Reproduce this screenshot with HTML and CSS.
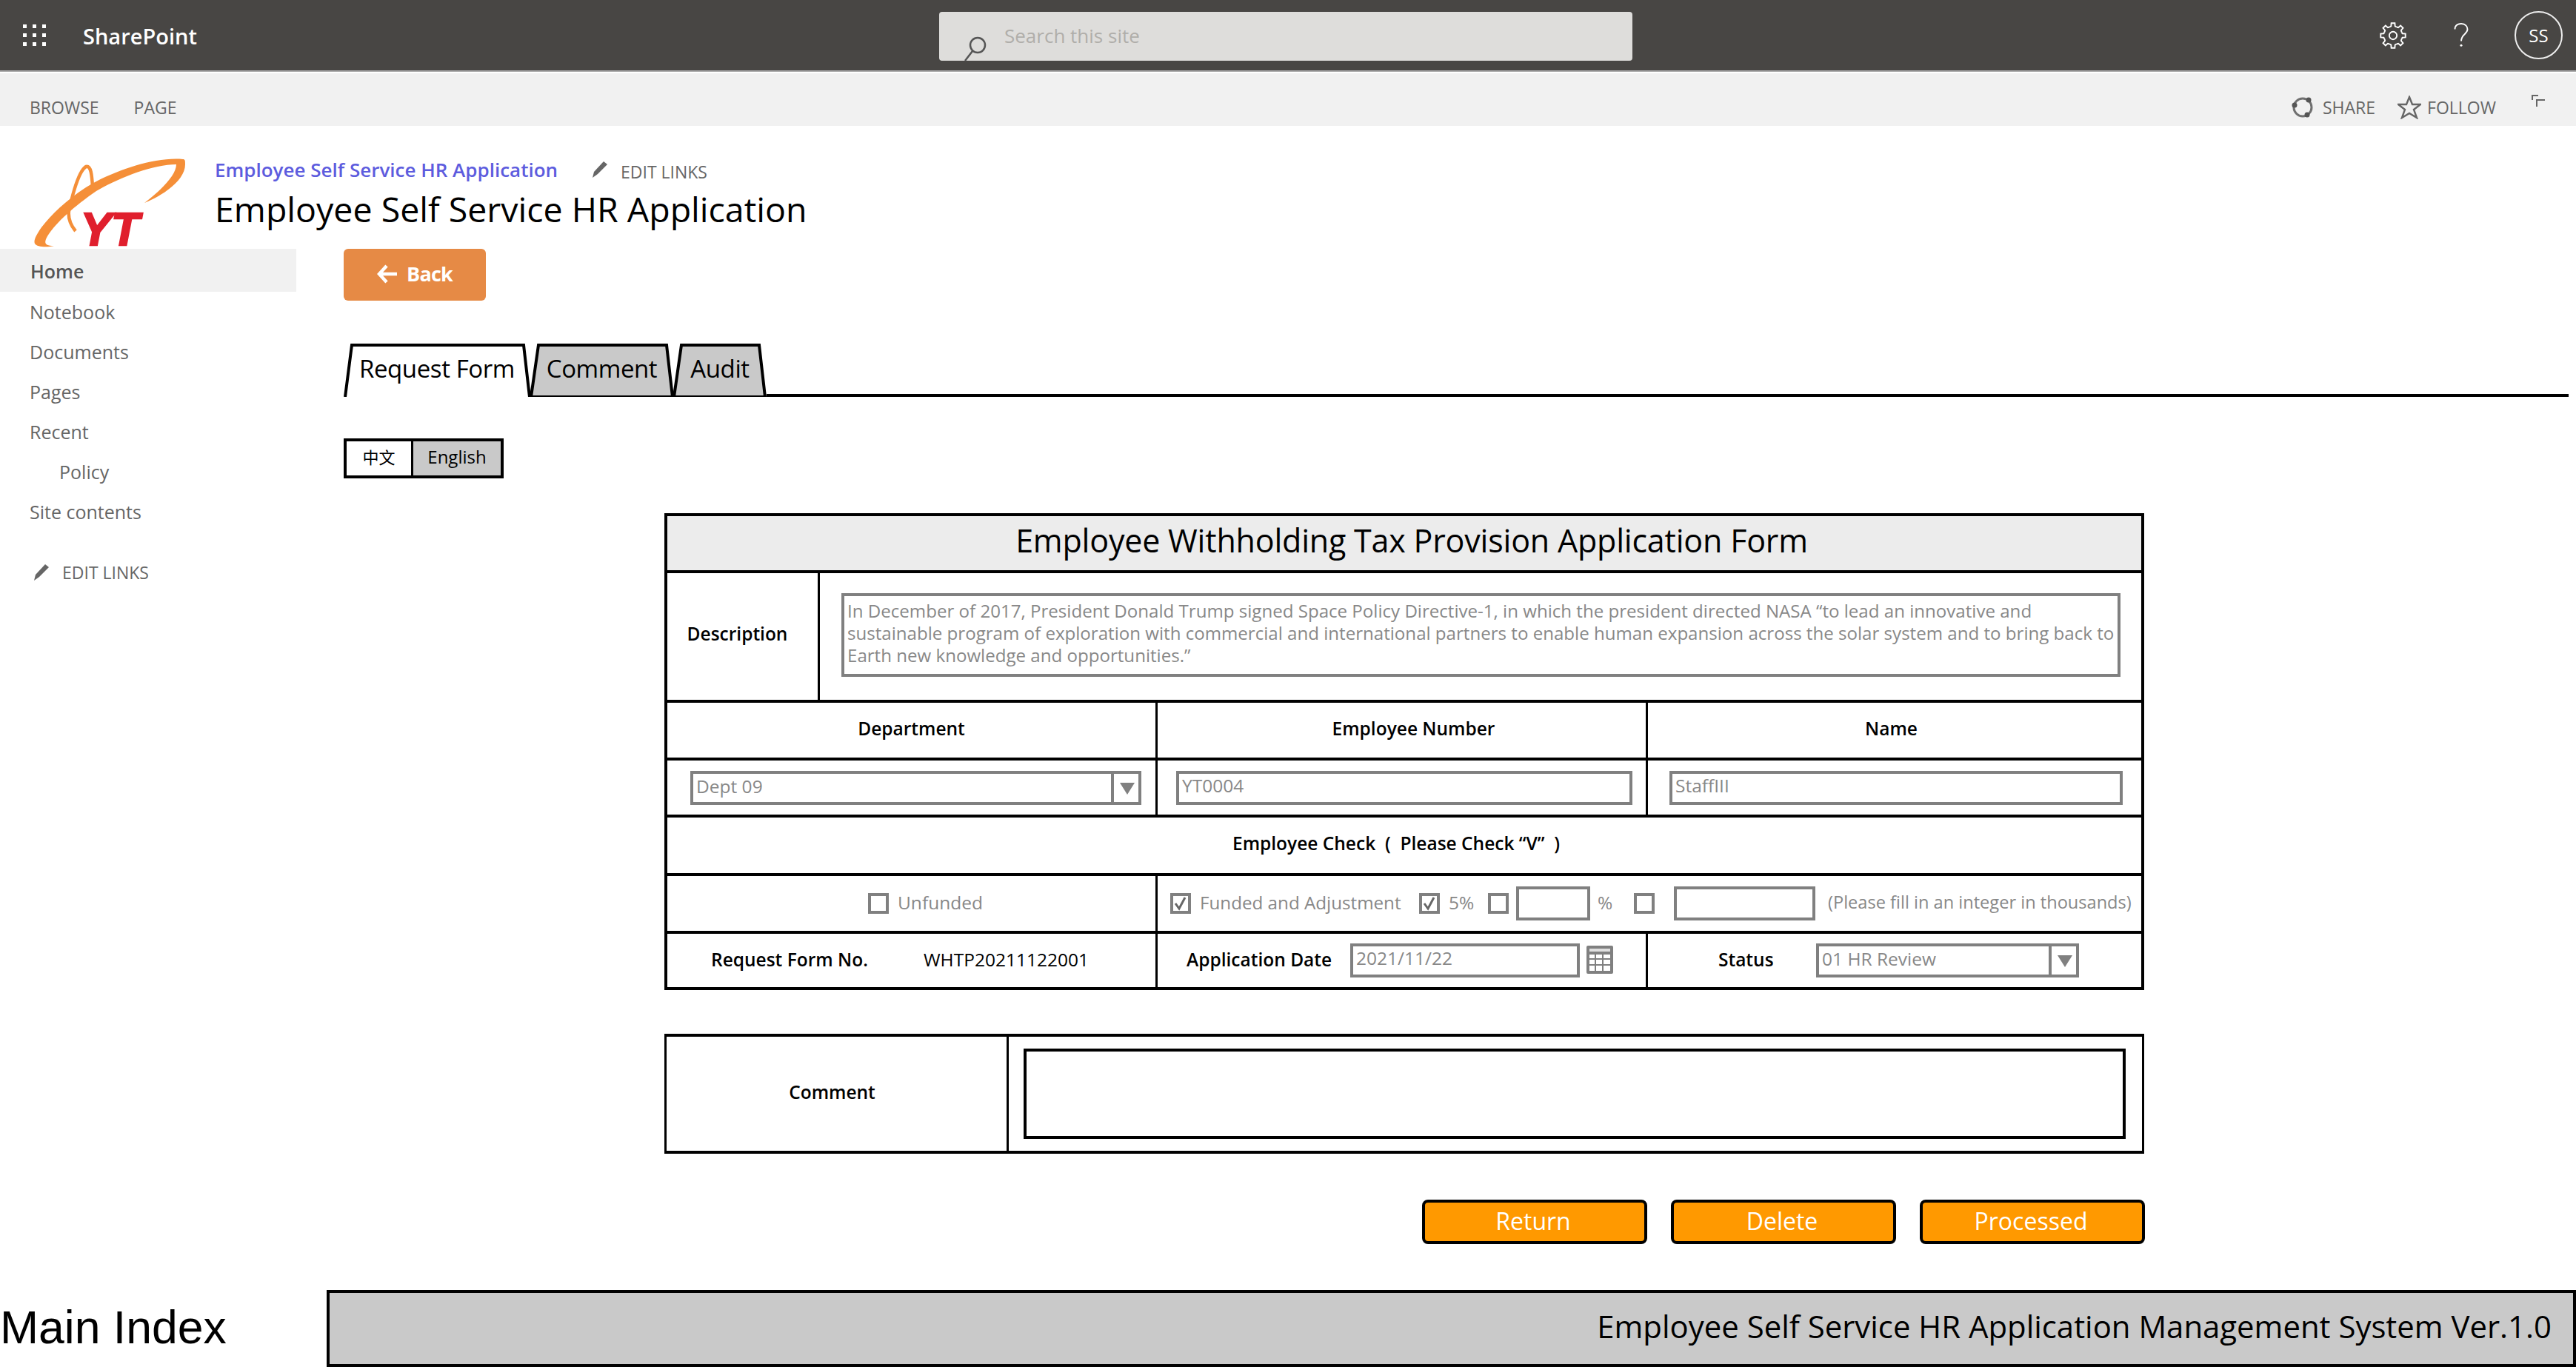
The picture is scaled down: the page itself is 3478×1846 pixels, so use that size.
FILE: index.html
```html
<!DOCTYPE html>
<html lang="en">
  <head>
    <meta charset="UTF-8" />
    <title>Employee Self Service HR Application</title>
    <link rel="stylesheet" href="styles.css">
  </head>

  <body>
    <div class="topbar">
      <svg class="waffle" width="34" height="32" viewBox="0 0 34 32">
        <g fill="#fff">
          <rect x="1" y="1" width="5" height="5" /><rect x="14" y="1" width="5" height="5" /><rect x="27" y="1" width="5" height="5" />
          <rect x="1" y="13" width="5" height="5" /><rect x="14" y="13" width="5" height="5" /><rect x="27" y="13" width="5" height="5" />
          <rect x="1" y="25" width="5" height="5" /><rect x="14" y="25" width="5" height="5" /><rect x="27" y="25" width="5" height="5" />
        </g>
      </svg>
      <div class="brand">SharePoint</div>
      <div class="search">
        <svg class="search-icon" width="42" height="40" viewBox="0 0 42 40">
          <circle cx="26" cy="18" r="10" fill="none" stroke="#555" stroke-width="2.5" />
          <path d="M19 26 L9 39" stroke="#555" stroke-width="2.5" />
        </svg>
        <span class="search-text">Search this site</span>
      </div>
      <div class="top-icons">
        <svg class="gear" width="36" height="36" viewBox="0 0 32 32">
          <defs>
            <path id="tooth" d="M11.8 5.8 L13.6 4.75 L13.9 1.15 H18.1 L18.4 4.75 L20.2 5.8" />
          </defs>
          <g fill="none" stroke="#fff" stroke-width="1.7">
            <use href="#tooth" />
            <use href="#tooth" transform="rotate(45 16 16)" />
            <use href="#tooth" transform="rotate(90 16 16)" />
            <use href="#tooth" transform="rotate(135 16 16)" />
            <use href="#tooth" transform="rotate(180 16 16)" />
            <use href="#tooth" transform="rotate(225 16 16)" />
            <use href="#tooth" transform="rotate(270 16 16)" />
            <use href="#tooth" transform="rotate(315 16 16)" />
            <circle cx="16" cy="16" r="4.6" />
          </g>
        </svg>
        <svg class="help" width="24" height="34" viewBox="0 0 24 36">
          <path d="M3 9 C3 3 8 1 12 1 C18 1 21 5 21 9 C21 16 12 16 12 26" fill="none" stroke="#fff" stroke-width="2" />
          <circle cx="12" cy="32" r="1.6" fill="#fff" />
        </svg>
        <div class="avatar">SS</div>
      </div>
    </div>

    <div class="ribbon">
      <div class="ribbon-tabs">
        <span>BROWSE</span>
        <span>PAGE</span>
      </div>
      <div class="ribbon-actions">
        <svg width="30" height="30" viewBox="0 0 30 30">
          <circle cx="15" cy="15" r="12" fill="none" stroke="#707070" stroke-width="3" />
          <circle cx="23" cy="5" r="3.5" fill="#555" /><circle cx="4" cy="12" r="3.5" fill="#555" /><circle cx="21" cy="25" r="3.5" fill="#555" />
        </svg>
        <span class="share-text">SHARE</span>
        <svg class="star" width="32" height="32" viewBox="0 0 32 32">
          <polygon points="16,2 20,12 31,12 22,19 26,30 16,24 6,30 10,19 1,12 12,12" fill="none" stroke="#666" stroke-width="2.4" />
        </svg>
        <span class="follow-text">FOLLOW</span>
        <svg class="focus" width="20" height="18" viewBox="0 0 20 18">
          <path d="M9 1 H1 V7 M18 7 H7 V16" fill="none" stroke="#666" stroke-width="2" />
        </svg>
      </div>
    </div>

    <div class="site-head">
      <svg class="logo" width="206" height="140" viewBox="0 0 206 140">
        <path d="M201 3 C165 0 120 15 84 33 C55 48 25 75 10 95 C3 105 -1 113 1 117 C4 122 18 122 27 120 C14 120 13 116 18 107 C30 88 55 66 84 46 C115 28 160 10 192 10 C192 25 170 46 149 62 C178 50 204 30 204 10 C204 5 204 3 201 3 Z" fill="#f58f38" />
        <path d="M56 100 C46 88 44 75 50 60 C55 40 62 18 70 13 C77 11 78 25 79 40" fill="none" stroke="#f58f38" stroke-width="4.5" />
        <text class="logo-text" x="63" y="119" textLength="79" lengthAdjust="spacingAndGlyphs">YT</text>
      </svg>
      <div class="site-titles">
        <div class="crumbs">
          <a class="crumb">Employee Self Service HR Application</a>
          <svg class="pencil" width="24" height="24" viewBox="0 0 24 24">
            <path d="M2 23 L4 15 L17 1 L22 5 L9 18 Z" fill="#666" />
          </svg>
          <span class="edit-links">EDIT LINKS</span>
        </div>
        <h1 class="site-title">Employee Self Service HR Application</h1>
      </div>
    </div>

    <div class="main">
      <div class="sidebar">
        <div class="nav-item nav-active">Home</div>
        <div class="nav-item">Notebook</div>
        <div class="nav-item">Documents</div>
        <div class="nav-item">Pages</div>
        <div class="nav-item">Recent</div>
        <div class="nav-item nav-sub">Policy</div>
        <div class="nav-item">Site contents</div>
        <div class="nav-edit">
          <svg class="pencil" width="24" height="24" viewBox="0 0 24 24">
            <path d="M2 23 L4 15 L17 1 L22 5 L9 18 Z" fill="#666" />
          </svg>
          <span class="edit-links">EDIT LINKS</span>
        </div>
      </div>

      <div class="content">
        <button class="back">
          <svg width="28" height="26" viewBox="0 0 28 26">
            <path d="M13 2 L3 13 L13 24 M3 13 H27" fill="none" stroke="#fff" stroke-width="4.5" />
          </svg>
          <span>Back</span>
        </button>

        <div class="tabs">
          <div class="tab tab-request">
            <svg class="tab-shape" viewBox="0 0 252 72" preserveAspectRatio="none">
              <path d="M2 72 L11 2 H243 L251 72" fill="#fff" stroke="#000" stroke-width="4" />
            </svg>
            <span class="tab-label">Request Form</span>
          </div>
          <div class="tab tab-comment">
            <svg class="tab-shape" viewBox="0 0 193 72" preserveAspectRatio="none">
              <path d="M1 72 L11 2 H184 L192 72 Z" fill="#c9c9c9" stroke="#000" stroke-width="4" />
            </svg>
            <span class="tab-label">Comment</span>
          </div>
          <div class="tab tab-audit">
            <svg class="tab-shape" viewBox="0 0 126 72" preserveAspectRatio="none">
              <path d="M1 72 L11 2 H116 L124 72 Z" fill="#c9c9c9" stroke="#000" stroke-width="4" />
            </svg>
            <span class="tab-label">Audit</span>
          </div>
          <div class="tab-rule"></div>
        </div>

        <div class="lang">
          <div class="lang-zh">中文</div>
          <div class="lang-en">English</div>
        </div>

        <div class="form">
          <div class="form-title">Employee Withholding Tax Provision Application Form</div>

          <div class="row row-desc">
            <div class="cell cell-label">Description</div>
            <div class="cell cell-desc">
              <div class="field textarea">In December of 2017, President Donald Trump signed Space Policy Directive-1, in which the president directed NASA “to lead an innovative and<br>sustainable program of exploration with commercial and international partners to enable human expansion across the solar system and to bring back to<br>Earth new knowledge and opportunities.”</div>
            </div>
          </div>

          <div class="row row-cols row-head">
            <div class="cell cell-label">Department</div>
            <div class="cell cell-label cell-empno">Employee Number</div>
            <div class="cell cell-label cell-name-head">Name</div>
          </div>

          <div class="row row-cols row-inputs">
            <div class="cell cell-dept">
              <div class="field select">
                <span class="select-value">Dept 09</span>
                <span class="select-arrow"></span>
              </div>
            </div>
            <div class="cell cell-no"><div class="field">YT0004</div></div>
            <div class="cell cell-name"><div class="field">StaffIII</div></div>
          </div>

          <div class="row row-check-title">
            <div class="cell cell-label">Employee Check &nbsp;( &nbsp;Please Check “V” &nbsp;)</div>
          </div>

          <div class="row row-checks">
            <div class="cell cell-unfunded">
              <span class="box"></span>
              <span class="check-text gap-12">Unfunded</span>
            </div>
            <div class="cell cell-funded">
              <span class="box box-on">
                <svg width="20" height="20" viewBox="0 0 20 20"><path d="M3 10 L8 17 L16 2" fill="none" stroke="#666" stroke-width="3" /></svg>
              </span>
              <span class="check-text gap-12 text-funded">Funded and Adjustment</span>
              <span class="box box-on gap-26">
                <svg width="20" height="20" viewBox="0 0 20 20"><path d="M3 10 L8 17 L16 2" fill="none" stroke="#666" stroke-width="3" /></svg>
              </span>
              <span class="check-text gap-12 text-five">5%</span>
              <span class="box gap-19"></span>
              <div class="field input-pct gap-10"></div>
              <span class="check-text gap-10 text-pct">%</span>
              <span class="box gap-29"></span>
              <div class="field input-amt gap-26"></div>
              <span class="check-text gap-17 text-hint">(Please fill in an integer in thousands)</span>
            </div>
          </div>

          <div class="row row-cols row-meta">
            <div class="cell cell-reqno">
              <span class="meta-label label-reqno">Request Form No.</span>
              <span class="meta-value">WHTP20211122001</span>
            </div>
            <div class="cell cell-date">
              <span class="meta-label label-date">Application Date</span>
              <div class="field input-date">2021/11/22</div>
              <svg class="calendar" width="36" height="38" viewBox="0 0 36 38">
                <rect x="0" y="0" width="36" height="38" rx="2" fill="#808080" />
                <rect x="4" y="4" width="28" height="4" fill="#e0e0e0" />
                <g fill="#fff">
                  <rect x="4" y="12" width="7" height="5" /><rect x="13" y="12" width="8" height="5" /><rect x="23" y="12" width="9" height="5" />
                  <rect x="4" y="19" width="7" height="6" /><rect x="13" y="19" width="8" height="6" /><rect x="23" y="19" width="9" height="6" />
                  <rect x="4" y="27" width="7" height="7" /><rect x="13" y="27" width="8" height="7" /><rect x="23" y="27" width="9" height="7" />
                </g>
              </svg>
            </div>
            <div class="cell cell-status">
              <span class="meta-label label-status">Status</span>
              <div class="field select input-status">
                <span class="select-value">01 HR Review</span>
                <span class="select-arrow"></span>
              </div>
            </div>
          </div>
        </div>

        <div class="comment">
          <div class="comment-label">Comment</div>
          <div class="comment-cell">
            <div class="comment-box"></div>
          </div>
        </div>

        <div class="actions">
          <button class="action">Return</button>
          <button class="action">Delete</button>
          <button class="action">Processed</button>
        </div>
      </div>
    </div>

    <div class="footer">
      <div class="footer-index">Main Index</div>
      <div class="footer-bar">Employee Self Service HR Application Management System Ver.1.0</div>
    </div>
  </body>
</html>
```

FILE: styles.css
```css
html,
body {
  margin: 0;
  height: 1846px;
  overflow: hidden;
  background: #fff;
}
body {
  font-family: "Open Sans", "Noto Sans CJK SC", sans-serif;
  color: #000;
}

/* top bar */
.topbar {
  display: flex;
  align-items: center;
  height: 95px;
  background: #484644;
  border-bottom: 2px solid #aaa;
}
.waffle {
  margin-left: 30px;
}
.brand {
  margin-left: 48px;
  width: 1156px;
  padding-top: 2px;
  color: #fff;
  font-size: 29px;
  font-weight: 600;
}
.search {
  display: flex;
  width: 936px;
  height: 66px;
  margin-top: 3px;
  background: #dedddb;
  border-radius: 4px;
  align-items: center;
}
.search-icon {
  margin: 27px 0 0 26px;
}
.search-text {
  margin: -2px 0 0 20px;
  color: #b0aeaa;
  font-size: 26px;
}
.top-icons {
  display: flex;
  align-items: center;
  margin-left: auto;
  padding-right: 18px;
}
.help {
  margin-left: 62px;
}
.avatar {
  display: flex;
  align-items: center;
  justify-content: center;
  width: 61px;
  height: 61px;
  margin-left: 60px;
  border: 2px solid #eee;
  border-radius: 50%;
  color: #fff;
  font-size: 24px;
}

/* ribbon */
.ribbon {
  display: flex;
  align-items: center;
  height: 71px;
  margin-top: 2px;
  background: #f1f1f1;
  color: #666;
  font-size: 23px;
}
.ribbon-tabs {
  display: flex;
  gap: 47px;
  margin: 20px 0 0 40px;
}
.ribbon-actions {
  display: flex;
  align-items: center;
  margin: 20px 40px 0 auto;
}
.share-text {
  margin-left: 12px;
}
.star {
  margin-left: 30px;
}
.follow-text {
  margin-left: 8px;
}
.focus {
  margin: -16px 0 0 48px;
}

/* site header */
.site-head {
  display: flex;
  height: 166px;
}
.logo {
  flex: none;
  margin: 42px 0 0 46px;
}
.logo-text {
  font-family: "Liberation Sans", sans-serif;
  font-style: italic;
  font-weight: 700;
  font-size: 63px;
  fill: #e01f2d;
  stroke: #e01f2d;
  stroke-width: 2.5px;
}
.site-titles {
  margin: 43px 0 0 38px;
}
.crumbs {
  display: flex;
  align-items: center;
  height: 32px;
}
.crumb {
  width: 508px;
  color: #5d5cde;
  font-size: 26px;
  font-weight: 600;
  white-space: nowrap;
}
.pencil {
  flex: none;
}
.edit-links {
  margin-left: 16px;
  color: #666;
  font-size: 23px;
}
.crumbs .edit-links {
  margin-top: 6px;
}
.site-title {
  margin: 7px 0 0;
  font-size: 46.5px;
  font-weight: 400;
  line-height: 60px;
  white-space: nowrap;
}

/* layout */
.main {
  display: flex;
  height: 1406px;
}
.sidebar {
  flex: none;
  width: 400px;
}
.nav-item {
  height: 54px;
  padding-left: 40px;
  color: #666;
  font-size: 25px;
  line-height: 52px;
}
.nav-active {
  height: 58px;
  padding-left: 41px;
  line-height: 60px;
  margin-bottom: 1px;
  background: #f1f1f1;
  color: #555;
  font-weight: 600;
}
.nav-sub {
  padding-left: 80px;
}
.nav-edit {
  display: flex;
  align-items: center;
  margin: 38px 0 0 44px;
}
.content {
  flex: 1;
  padding: 0 10px 0 64px;
}

.back {
  display: flex;
  align-items: center;
  justify-content: center;
  gap: 12px;
  width: 192px;
  height: 70px;
  padding: 0 0 3px;
  border: none;
  border-radius: 6px;
  background: #e68a45;
  color: #fff;
  font: 700 27px "Open Sans", sans-serif;
  letter-spacing: -0.8px;
}

/* tabs */
.tabs {
  display: flex;
  align-items: flex-end;
  height: 72px;
  margin-top: 58px;
}
.tab {
  position: relative;
  flex: none;
  height: 72px;
  text-align: center;
  font-size: 33px;
  line-height: 68px;
  letter-spacing: -0.4px;
}
.tab-request {
  width: 252px;
}
.tab-comment {
  width: 193px;
}
.tab-audit {
  width: 126px;
}
.tab-shape {
  position: absolute;
  left: 0;
  top: 0;
  width: 100%;
  height: 100%;
}
.tab-label {
  position: relative;
}
.tab-rule {
  flex: 1;
  border-bottom: 4px solid #000;
}

/* language switch */
.lang {
  display: flex;
  width: 216px;
  height: 54px;
  margin-top: 56px;
  box-sizing: border-box;
  border: 4px solid #000;
  font-size: 24px;
  line-height: 42px;
}
.lang-zh {
  width: 87px;
  text-align: center;
  font-size: 22px;
  border-right: 3px solid #000;
}
.lang-en {
  flex: 1;
  text-align: center;
  background: #c9c9c9;
}

/* form */
.form {
  width: 1998px;
  height: 644px;
  margin: 47px 0 0 433px;
  box-sizing: border-box;
  border: 4px solid #000;
  font-size: 24.5px;
}
.form-title {
  height: 73px;
  padding-left: 20px;
  box-sizing: border-box;
  background: #ececec;
  text-align: center;
  font-size: 43px;
  line-height: 66px;
  letter-spacing: -0.2px;
}
.row {
  display: grid;
  box-sizing: border-box;
  border-top: 4px solid #000;
}
.row-cols {
  grid-template-columns: 659px 662px 1fr;
}
.row-desc {
  grid-template-columns: 203px 1fr;
  height: 175px;
}
.row-head {
  height: 78px;
}
.row-inputs {
  height: 77px;
}
.row-check-title {
  height: 79px;
}
.row-checks {
  grid-template-columns: 659px 1fr;
  height: 78px;
}
.row-meta {
  height: 76px;
}
.cell {
  display: flex;
  align-items: center;
  box-sizing: border-box;
  min-width: 0;
}
.cell + .cell {
  border-left: 3px solid #000;
}
.cell-label {
  justify-content: center;
  padding-bottom: 6px;
  font-weight: 600;
}
.row-desc .cell-label {
  padding: 0 14px 8px 0;
}
.cell-empno {
  padding-left: 32px;
}
.cell-name-head {
  padding-right: 9px;
}
.row-check-title .cell-label {
  padding-right: 22px;
}
.cell-desc {
  padding: 0 28px 0 29px;
  margin-top: -4px;
}
.field {
  box-sizing: border-box;
  flex: 1;
  height: 46px;
  border: 4px solid #808080;
  padding: 0 4px;
  color: #888;
  font-size: 24.5px;
  line-height: 31px;
  white-space: nowrap;
}
.textarea {
  height: 113px;
  padding: 5px 4px;
  font-size: 24.1px;
  line-height: 30px;
}
.select {
  display: flex;
}
.select-value {
  flex: 1;
  padding-top: 1px;
}
.select-arrow {
  position: relative;
  width: 33px;
  margin-right: -4px;
  border-left: 4px solid #808080;
}
.select-arrow:after {
  content: "";
  position: absolute;
  left: 8px;
  top: 12px;
  border-style: solid;
  border-width: 16px 10px 0;
  border-color: #808080 transparent transparent;
}
.cell-dept {
  padding: 0 19px 0 31px;
}
.cell-no {
  padding: 0 18px 0 25px;
}
.cell-name {
  padding: 0 25px 0 29px;
}
.cell-unfunded {
  padding-left: 271px;
}
.cell-funded {
  padding-left: 17px;
}
.box {
  display: flex;
  flex: none;
  align-items: center;
  justify-content: center;
  box-sizing: border-box;
  width: 28px;
  height: 28px;
  border: 4px solid #808080;
}
.check-text {
  flex: none;
  padding-bottom: 4px;
  color: #888;
  white-space: nowrap;
}
.text-funded {
  width: 270px;
  font-size: 24.2px;
}
.text-five {
  width: 34px;
}
.text-pct {
  width: 20px;
}
.text-hint {
  font-size: 23.6px;
}
.input-pct {
  flex: none;
  width: 100px;
}
.input-amt {
  flex: none;
  width: 191px;
}
.gap-10 {
  margin-left: 10px;
}
.gap-12 {
  margin-left: 12px;
}
.gap-17 {
  margin-left: 17px;
}
.gap-19 {
  margin-left: 19px;
}
.gap-26 {
  margin-left: 26px;
}
.gap-29 {
  margin-left: 29px;
}
.meta-label {
  flex: none;
  padding-bottom: 4px;
  font-weight: 600;
  white-space: nowrap;
}
.meta-value {
  padding-bottom: 4px;
  white-space: nowrap;
}
.cell-reqno {
  padding-left: 59px;
}
.label-reqno {
  width: 287px;
}
.cell-date {
  padding-left: 39px;
}
.label-date {
  width: 221px;
}
.input-date {
  flex: none;
  width: 310px;
}
.calendar {
  flex: none;
  margin: -2px 0 0 9px;
}
.cell-status {
  padding-left: 95px;
}
.label-status {
  width: 132px;
}
.input-status {
  flex: none;
  width: 355px;
}

/* comment */
.comment {
  display: flex;
  width: 1998px;
  height: 162px;
  margin: 59px 0 0 433px;
  box-sizing: border-box;
  border-top: 4px solid #000;
  border-bottom: 4px solid #000;
  border-left: 3px solid #000;
  border-right: 3px solid #000;
}
.comment-label {
  display: flex;
  align-items: center;
  justify-content: center;
  width: 462px;
  padding: 0 12px 6px 0;
  box-sizing: border-box;
  border-right: 3px solid #000;
  font-size: 24.5px;
  font-weight: 600;
}
.comment-cell {
  flex: 1;
  padding: 16px 22px 16px 20px;
}
.comment-box {
  box-sizing: border-box;
  height: 100%;
  border: 4px solid #000;
}

/* buttons */
.actions {
  display: flex;
  gap: 32px;
  justify-content: flex-end;
  width: 1999px;
  height: 60px;
  margin: 62px 0 0 433px;
}
.action {
  box-sizing: border-box;
  width: 304px;
  height: 60px;
  padding: 0 4px 3px 0;
  border: 4px solid #000;
  border-radius: 8px;
  background: #ff9900;
  color: #fff;
  font: 400 32px "Open Sans", sans-serif;
}

/* footer */
.footer {
  display: flex;
  height: 104px;
}
.footer-index {
  width: 441px;
  padding-top: 15px;
  font-family: "Liberation Sans", sans-serif;
  font-size: 62.5px;
  line-height: 70px;
}
.footer-bar {
  flex: 1;
  box-sizing: border-box;
  padding: 0 29px 0 0;
  border: 4px solid #000;
  background: #c9c9c9;
  text-align: right;
  font-size: 41.9px;
  line-height: 90px;
}
```
